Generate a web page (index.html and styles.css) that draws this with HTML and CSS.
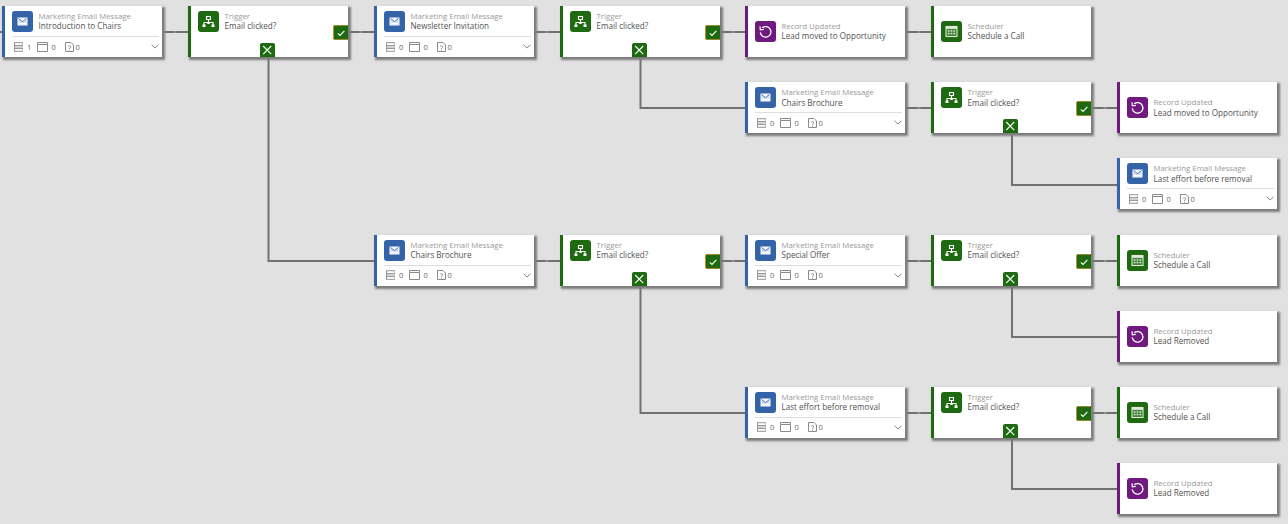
FILE: index.html
```html
<!DOCTYPE html>
<html lang="en">
<head>
<meta charset="utf-8">
<title>Customer journey</title>
<link rel="stylesheet" href="styles.css">
</head>
<body>
<svg width="0" height="0" class="defs">
  <symbol id="i-mail" viewBox="0 0 21 21"><rect x="6" y="7" width="9" height="7" fill="#d5e0f1" stroke="#fff"/><path d="M6.5 7.5l4 3 4-3" fill="#fff" stroke="#3463a8" stroke-width=".9"/><rect x="7" y="12" width="7" height="1.1" fill="#fff"/></symbol>
  <symbol id="i-trigger" viewBox="0 0 21 21"><g fill="none" stroke="#fff" stroke-width="1.1"><rect x="8.5" y="5.5" width="4" height="3"/><path d="M10.5 8.5v3M6 14v-2.5h9V14"/></g><g fill="#fff"><rect x="4.5" y="13.5" width="3" height="2.5"/><rect x="13.5" y="13.5" width="3" height="2.5"/><rect x="9.3" y="11" width="2.4" height="2"/></g></symbol>
  <symbol id="i-record" viewBox="0 0 21 21"><path d="M7.2 6.8a5.3 5.3 0 1 1-1.9 4.6" fill="none" stroke="#fff" stroke-width="1.3"/><path d="M5 5.2l.3 3.6 3.5-.4" fill="none" stroke="#fff" stroke-width="1.2"/></symbol>
  <symbol id="i-sched" viewBox="0 0 21 21"><rect x="5" y="5.5" width="11" height="10" fill="#fff" fill-opacity=".15" stroke="#dfe8d8" stroke-width="1.1"/><rect x="5" y="5.5" width="11" height="2.4" fill="#dfe8d8"/><g fill="#dfe8d8"><rect x="6.8" y="9.2" width="1.7" height="1.5"/><rect x="9.6" y="9.2" width="1.7" height="1.5"/><rect x="12.4" y="9.2" width="1.7" height="1.5"/><rect x="6.8" y="11.8" width="1.7" height="1.5"/><rect x="9.6" y="11.8" width="1.7" height="1.5"/><rect x="12.4" y="11.8" width="1.7" height="1.5"/></g></symbol>
  <symbol id="i-stack" viewBox="0 0 10 10"><g fill="none" stroke="#8f8f8f"><rect x=".5" y=".5" width="9" height="9"/><path d="M.5 3.5h9M.5 6.5h9"/></g><rect x="1" y="4" width="8" height="2" fill="#d0d0d0"/></symbol>
  <symbol id="i-cal" viewBox="0 0 11 10"><path d="M.5 2.5h10v7H.5zM.5 2.5V.5h10v2M2.5 0v1M8.5 0v1" fill="none" stroke="#8a8a8a"/></symbol>
  <symbol id="i-doc" viewBox="0 0 9 10"><path d="M.5.5h5.5l2.5 2.5v6.5H.5z" fill="none" stroke="#8a8a8a"/><path d="M3.2 4.2q1.3-1 2.3 0t-1 2v.8M4.5 7.8v.9" fill="none" stroke="#777" stroke-width=".8"/></symbol>
  <symbol id="i-chev" viewBox="0 0 10 6"><path d="M.7.7L5 5l4.3-4.3" fill="none" stroke="#666"/></symbol>
  <symbol id="i-check" viewBox="0 0 14 14"><path d="M3.8 7.3l2.2 2.2 4.4-4.6" fill="none" stroke="#fff" stroke-width="1.1"/></symbol>
  <symbol id="i-x" viewBox="0 0 14 14"><path d="M3.2 3l8 8.2M11.2 3l-8 8.2" fill="none" stroke="#fff" stroke-width="1.1"/></symbol>
</svg>

<main class="canvas">
  <svg class="wires" width="1288" height="524" aria-hidden="true">
    <path d="M0 32H3M162 32H189M348 32H375M534 32H561M720 32H746M906 32H932"/>
    <path d="M906 108H932M1092 108H1118"/>
    <path d="M534 261H561M720 261H746M906 261H932M1092 261H1118"/>
    <path d="M906 413H932M1092 413H1118"/>
    <path d="M268.5 57V261H375"/>
    <path d="M640.5 57V108H746"/>
    <path d="M1012 133V185H1118"/>
    <path d="M640.5 286V413H746"/>
    <path d="M1012 286V337H1118"/>
    <path d="M1012 438V489H1118"/>
    <g class="ticks"><path d="M175 31v2M361 31v2M547 31v2M733 31v2M919 31v2M919 107v2M1105 107v2M547 260v2M733 260v2M919 260v2M1105 260v2M919 412v2M1105 412v2"/></g>
  </svg>

  <div class="grid">
    <article class="card email c1 r1"><div class="head"><span class="icon"><svg><use href="#i-mail"/></svg></span><div class="text"><p class="kind">Marketing Email Message</p><p class="name">Introduction to Chairs</p></div></div><div class="foot"><svg class="f-stack"><use href="#i-stack"/></svg><span class="n1">1</span><svg class="f-cal"><use href="#i-cal"/></svg><span class="n2">0</span><svg class="f-doc"><use href="#i-doc"/></svg><span class="n3">0</span><svg class="f-chev"><use href="#i-chev"/></svg></div></article>
    <article class="card trigger c2 r1"><div class="head"><span class="icon"><svg><use href="#i-trigger"/></svg></span><div class="text"><p class="kind">Trigger</p><p class="name">Email clicked?</p></div></div><span class="yes"><svg><use href="#i-check"/></svg></span><span class="no"><svg><use href="#i-x"/></svg></span></article>
    <article class="card email c3 r1"><div class="head"><span class="icon"><svg><use href="#i-mail"/></svg></span><div class="text"><p class="kind">Marketing Email Message</p><p class="name">Newsletter Invitation</p></div></div><div class="foot"><svg class="f-stack"><use href="#i-stack"/></svg><span class="n1">0</span><svg class="f-cal"><use href="#i-cal"/></svg><span class="n2">0</span><svg class="f-doc"><use href="#i-doc"/></svg><span class="n3">0</span><svg class="f-chev"><use href="#i-chev"/></svg></div></article>
    <article class="card trigger c4 r1"><div class="head"><span class="icon"><svg><use href="#i-trigger"/></svg></span><div class="text"><p class="kind">Trigger</p><p class="name">Email clicked?</p></div></div><span class="yes"><svg><use href="#i-check"/></svg></span><span class="no"><svg><use href="#i-x"/></svg></span></article>
    <article class="card record c5 r1"><div class="head"><span class="icon"><svg><use href="#i-record"/></svg></span><div class="text"><p class="kind">Record Updated</p><p class="name">Lead moved to Opportunity</p></div></div></article>
    <article class="card sched c6 r1"><div class="head"><span class="icon"><svg><use href="#i-sched"/></svg></span><div class="text"><p class="kind">Scheduler</p><p class="name">Schedule a Call</p></div></div></article>

    <article class="card email c5 r2"><div class="head"><span class="icon"><svg><use href="#i-mail"/></svg></span><div class="text"><p class="kind">Marketing Email Message</p><p class="name">Chairs Brochure</p></div></div><div class="foot"><svg class="f-stack"><use href="#i-stack"/></svg><span class="n1">0</span><svg class="f-cal"><use href="#i-cal"/></svg><span class="n2">0</span><svg class="f-doc"><use href="#i-doc"/></svg><span class="n3">0</span><svg class="f-chev"><use href="#i-chev"/></svg></div></article>
    <article class="card trigger c6 r2"><div class="head"><span class="icon"><svg><use href="#i-trigger"/></svg></span><div class="text"><p class="kind">Trigger</p><p class="name">Email clicked?</p></div></div><span class="yes"><svg><use href="#i-check"/></svg></span><span class="no"><svg><use href="#i-x"/></svg></span></article>
    <article class="card record c7 r2"><div class="head"><span class="icon"><svg><use href="#i-record"/></svg></span><div class="text"><p class="kind">Record Updated</p><p class="name">Lead moved to Opportunity</p></div></div></article>

    <article class="card email c7 r3"><div class="head"><span class="icon"><svg><use href="#i-mail"/></svg></span><div class="text"><p class="kind">Marketing Email Message</p><p class="name">Last effort before removal</p></div></div><div class="foot"><svg class="f-stack"><use href="#i-stack"/></svg><span class="n1">0</span><svg class="f-cal"><use href="#i-cal"/></svg><span class="n2">0</span><svg class="f-doc"><use href="#i-doc"/></svg><span class="n3">0</span><svg class="f-chev"><use href="#i-chev"/></svg></div></article>

    <article class="card email c3 r4"><div class="head"><span class="icon"><svg><use href="#i-mail"/></svg></span><div class="text"><p class="kind">Marketing Email Message</p><p class="name">Chairs Brochure</p></div></div><div class="foot"><svg class="f-stack"><use href="#i-stack"/></svg><span class="n1">0</span><svg class="f-cal"><use href="#i-cal"/></svg><span class="n2">0</span><svg class="f-doc"><use href="#i-doc"/></svg><span class="n3">0</span><svg class="f-chev"><use href="#i-chev"/></svg></div></article>
    <article class="card trigger c4 r4"><div class="head"><span class="icon"><svg><use href="#i-trigger"/></svg></span><div class="text"><p class="kind">Trigger</p><p class="name">Email clicked?</p></div></div><span class="yes"><svg><use href="#i-check"/></svg></span><span class="no"><svg><use href="#i-x"/></svg></span></article>
    <article class="card email c5 r4"><div class="head"><span class="icon"><svg><use href="#i-mail"/></svg></span><div class="text"><p class="kind">Marketing Email Message</p><p class="name">Special Offer</p></div></div><div class="foot"><svg class="f-stack"><use href="#i-stack"/></svg><span class="n1">0</span><svg class="f-cal"><use href="#i-cal"/></svg><span class="n2">0</span><svg class="f-doc"><use href="#i-doc"/></svg><span class="n3">0</span><svg class="f-chev"><use href="#i-chev"/></svg></div></article>
    <article class="card trigger c6 r4"><div class="head"><span class="icon"><svg><use href="#i-trigger"/></svg></span><div class="text"><p class="kind">Trigger</p><p class="name">Email clicked?</p></div></div><span class="yes"><svg><use href="#i-check"/></svg></span><span class="no"><svg><use href="#i-x"/></svg></span></article>
    <article class="card sched c7 r4"><div class="head"><span class="icon"><svg><use href="#i-sched"/></svg></span><div class="text"><p class="kind">Scheduler</p><p class="name">Schedule a Call</p></div></div></article>

    <article class="card record c7 r5"><div class="head"><span class="icon"><svg><use href="#i-record"/></svg></span><div class="text"><p class="kind">Record Updated</p><p class="name">Lead Removed</p></div></div></article>

    <article class="card email c5 r6"><div class="head"><span class="icon"><svg><use href="#i-mail"/></svg></span><div class="text"><p class="kind">Marketing Email Message</p><p class="name">Last effort before removal</p></div></div><div class="foot"><svg class="f-stack"><use href="#i-stack"/></svg><span class="n1">0</span><svg class="f-cal"><use href="#i-cal"/></svg><span class="n2">0</span><svg class="f-doc"><use href="#i-doc"/></svg><span class="n3">0</span><svg class="f-chev"><use href="#i-chev"/></svg></div></article>
    <article class="card trigger c6 r6"><div class="head"><span class="icon"><svg><use href="#i-trigger"/></svg></span><div class="text"><p class="kind">Trigger</p><p class="name">Email clicked?</p></div></div><span class="yes"><svg><use href="#i-check"/></svg></span><span class="no"><svg><use href="#i-x"/></svg></span></article>
    <article class="card sched c7 r6"><div class="head"><span class="icon"><svg><use href="#i-sched"/></svg></span><div class="text"><p class="kind">Scheduler</p><p class="name">Schedule a Call</p></div></div></article>

    <article class="card record c7 r7"><div class="head"><span class="icon"><svg><use href="#i-record"/></svg></span><div class="text"><p class="kind">Record Updated</p><p class="name">Lead Removed</p></div></div></article>
  </div>
</main>
</body>
</html>
```
FILE: styles.css
```css
* { box-sizing: border-box; }
html, body { margin: 0; height: 100%; }
body {
  background: #e1e1e1;
  overflow: hidden;
  font-family: "Open Sans", "Liberation Sans", sans-serif;
}
.defs { position: absolute; }
.canvas { position: relative; width: 1288px; height: 524px; }
.wires { position: absolute; inset: 0; }
.wires path { fill: none; stroke: #717171; stroke-width: 2; }
.wires .ticks path { stroke: #8d8d8d; stroke-width: 3; }

.grid {
  position: relative;
  display: grid;
  padding: 6px 0 0 2px;
  grid-template-columns: 186px 186px 186px 185px 186px 186px 171px;
  grid-template-rows: 76.2px 76.2px 76.6px 76px 76px 76px 61px;
}
.c1 { grid-column: 1; } .c2 { grid-column: 2; } .c3 { grid-column: 3; } .c4 { grid-column: 4; }
.c5 { grid-column: 5; } .c6 { grid-column: 6; } .c7 { grid-column: 7; }
.r1 { grid-row: 1; } .r2 { grid-row: 2; } .r3 { grid-row: 3; } .r4 { grid-row: 4; }
.r5 { grid-row: 5; } .r6 { grid-row: 6; } .r7 { grid-row: 7; }

.card {
  position: relative;
  width: 160px;
  height: 51px;
  background: #fff;
  border-left: 3px solid #1e6a10;
  box-shadow: 2px 2px 2px 1px #7c7c7c;
  padding: 5px 6px 0 7px;
}
.email { border-left-color: #3463a8; }
.record { border-left-color: #70197f; }
.record .head, .sched .head { padding-top: 10px; }

.head { display: flex; gap: 5.5px; height: 25px; }
.icon {
  flex: none;
  width: 21px;
  height: 21px;
  border-radius: 3px;
  background: #1e6a10;
}
.icon svg { display: block; width: 21px; height: 21px; }
.email .icon { background: #3463a8; }
.record .icon { background: #70197f; }
.text { min-width: 0; }
.kind, .name {
  margin: 0;
  line-height: 10px;
  white-space: nowrap;
}
.kind { font-size: 7.8px; color: #9a9a9a; }
.name { font-size: 8.1px; color: #525252; font-weight: 500; margin-top: .4px; }

.foot {
  display: flex;
  align-items: center;
  height: 15px;
  border-top: 1px solid #dedede;
  padding: 5px 0 0 1.5px;
  font-size: 7.5px;
  line-height: 10px;
  color: #666;
  margin-right: -3px;
}
.foot svg { flex: none; display: block; height: 10px; }
.f-stack { width: 9.5px; }
.f-cal { width: 11px; margin-left: 5px; }
.f-doc { width: 9px; margin-left: 8.5px; }
.foot .f-chev { width: 8px; height: 5px; margin-left: auto; }
.n1 { margin-left: 4px; width: 5px; }
.n2 { margin-left: 3.5px; width: 5px; }
.n3 { margin-left: 1.5px; width: 5px; }

.yes, .no {
  position: absolute;
  display: block;
  background: #1e6a10;
}
.yes {
  right: 0;
  top: 19px;
  width: 15px;
  height: 15px;
  border-radius: 2px 0 0 2px;
  border-left: 1px solid #c98a2c;
  border-top: 1px solid #9a8a2c;
  border-bottom: 1px solid #9a8a2c;
}
.no {
  left: 69px;
  bottom: 0;
  width: 15px;
  height: 14px;
  border-radius: 2px 2px 0 0;
}
.yes svg, .no svg { display: block; width: 14px; height: 14px; }
```
